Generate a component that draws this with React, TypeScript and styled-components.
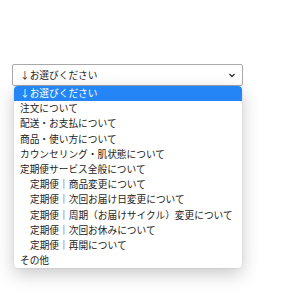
import { createGlobalStyle } from 'styled-components';
import styled from 'styled-components';

const GlobalStyle = createGlobalStyle`
  html, body {
    margin: 0;
    background: #ffffff;
  }
  body {
    font-family: 'Noto Sans CJK JP', 'Noto Sans', sans-serif;
  }
`;

const Page = styled.div`
  padding: 64px 0 0 12px;
  width: 283px;
  height: 300px;
  box-sizing: border-box;
`;

const SelectWrap = styled.div`
  position: relative;
  width: 231px;
`;

const SelectBox = styled.div`
  box-sizing: border-box;
  height: 22px;
  border: 1px solid #a9a9a9;
  border-radius: 2px;
  background: #fff;
  display: flex;
  align-items: center;
  justify-content: space-between;
  padding: 0 6px 0 7px;
  font-size: 9.7px;
  color: #1c1c1c;
`;

const Chevron = styled.svg`
  width: 8px;
  height: 8px;
  flex-shrink: 0;
`;

const Menu = styled.ul`
  position: absolute;
  top: 22px;
  left: 2px;
  right: 1px;
  margin: 0;
  padding: 0;
  list-style: none;
  background: #fff;
  border-radius: 4px;
  box-shadow: 0 6px 18px rgba(0, 0, 0, 0.22), 0 0 2px rgba(0, 0, 0, 0.12);
  overflow: hidden;
`;

const Option = styled.li<{ $selected?: boolean; $indent?: boolean }>`
  height: 15.2px;
  line-height: 15.2px;
  font-size: 9.7px;
  padding-left: ${(p) => (p.$indent ? '16px' : '6px')};
  color: ${(p) => (p.$selected ? '#fff' : '#1c1c1c')};
  background: ${(p) => (p.$selected ? '#2486f6' : 'transparent')};
  white-space: nowrap;
`;

const options: { label: string; indent?: boolean }[] = [
  { label: '↓お選びください' },
  { label: '注文について' },
  { label: '配送・お支払について' },
  { label: '商品・使い方について' },
  { label: 'カウンセリング・肌状態について' },
  { label: '定期便サービス全般について' },
  { label: '定期便｜商品変更について', indent: true },
  { label: '定期便｜次回お届け日変更について', indent: true },
  { label: '定期便｜周期（お届けサイクル）変更について', indent: true },
  { label: '定期便｜次回お休みについて', indent: true },
  { label: '定期便｜再開について', indent: true },
  { label: 'その他' },
];

export default function App() {
  return (
    <>
      <GlobalStyle />
      <Page>
        <SelectWrap>
          <SelectBox>
            <span>↓お選びください</span>
            <Chevron viewBox="0 0 8 8">
              <path d="M1.5 3 L4 5.5 L6.5 3" fill="none" stroke="#333" strokeWidth="1.3" />
            </Chevron>
          </SelectBox>
          <Menu>
            {options.map((o, i) => (
              <Option key={o.label} $selected={i === 0} $indent={o.indent}>
                {o.label}
              </Option>
            ))}
          </Menu>
        </SelectWrap>
      </Page>
    </>
  );
}
